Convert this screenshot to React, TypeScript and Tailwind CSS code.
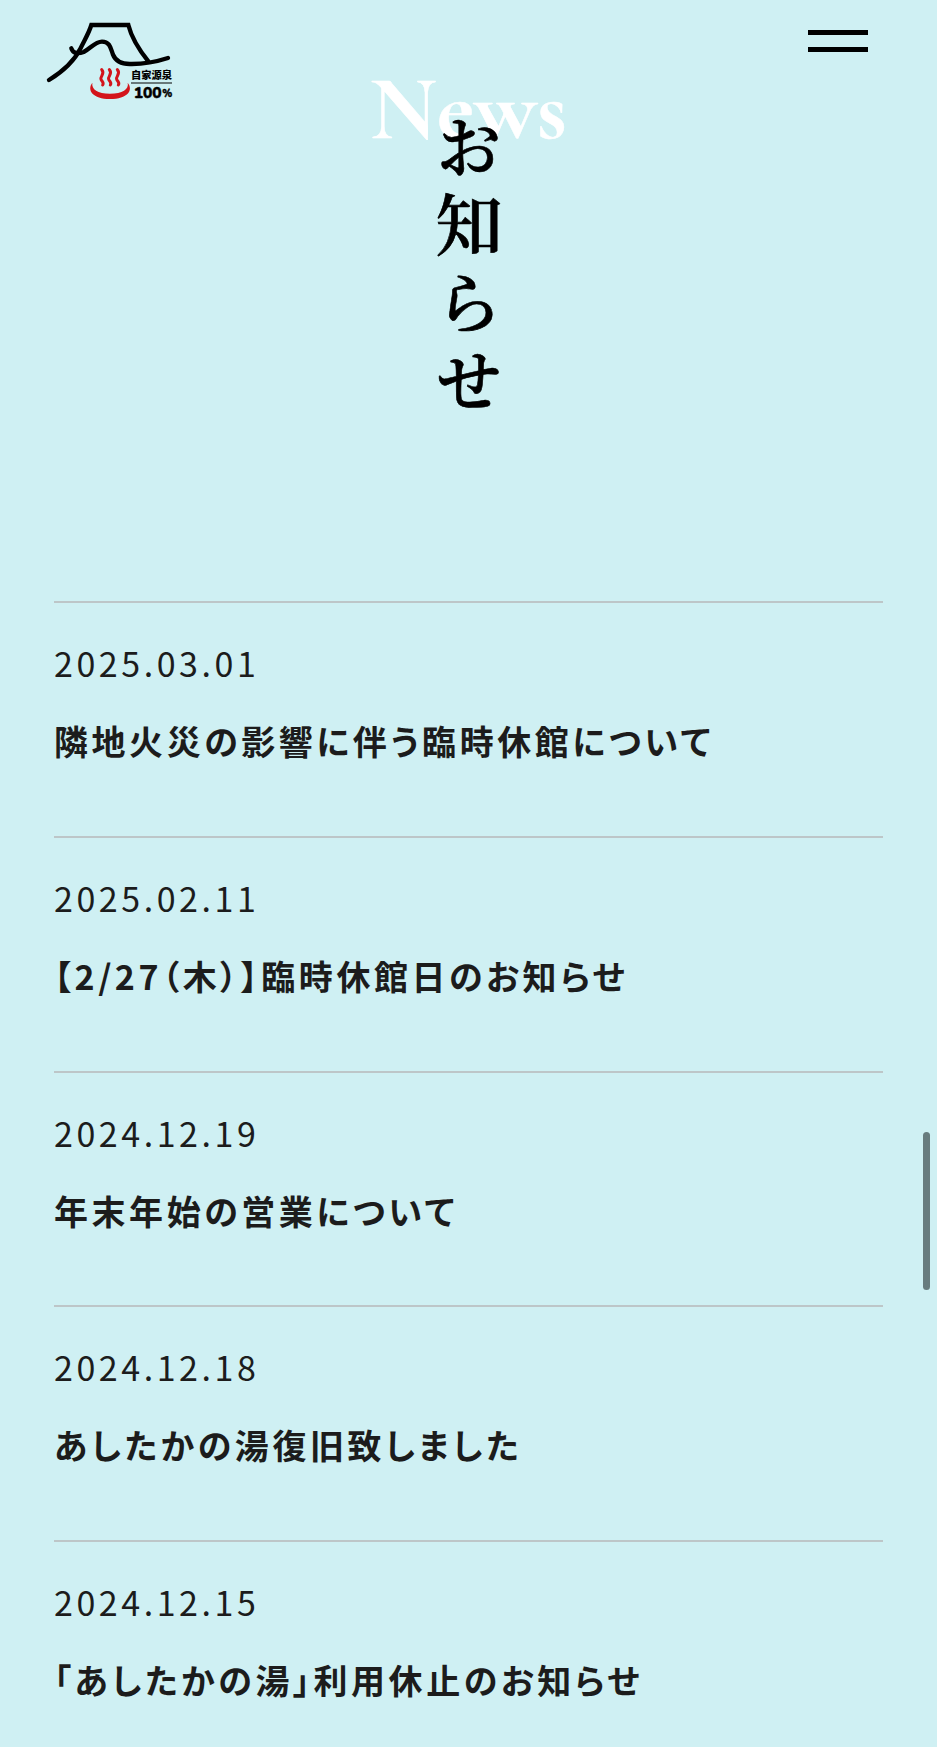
const news = [
  { date: '2025.03.01', title: '隣地火災の影響に伴う臨時休館について' },
  { date: '2025.02.11', title: '【2/27（木）】臨時休館日のお知らせ' },
  { date: '2024.12.19', title: '年末年始の営業について' },
  { date: '2024.12.18', title: 'あしたかの湯復旧致しました' },
  { date: '2024.12.15', title: '「あしたかの湯」利用休止のお知らせ' },
];

function Logo() {
  return (
    <svg width="160" height="100" viewBox="0 0 480 300" role="img" aria-label="自家源泉100%">
      <g fill="none" stroke="#000" strokeWidth="13" strokeLinecap="round" strokeLinejoin="miter">
        <path d="M57 210 C92 188 132 154 151 116 C168 82 177 68 184 45 H295 C306 89 330 123 355 154" />
        <path d="M124 115 C129 130 143 133 161 126 C181 116 195 95 216 95 C240 95 242 115 249 134 C257 154 275 162 299 162 C345 163 386 153 414 144" />
      </g>
      <g fill="none" stroke="#d3141b" strokeWidth="9" strokeLinecap="round">
        <path d="M215 179 c12 12 -6 20 -2 29 c3 7 10 9 5 17" />
        <path d="M238 179 c12 12 -6 20 -2 29 c3 7 10 9 5 17" />
        <path d="M262 179 c12 12 -6 20 -2 29 c3 7 10 9 5 17" />
      </g>
      <path d="M187 218 C170 240 188 267 240 267 C293 267 311 240 293 218 C298 237 277 251 240 251 C203 251 184 238 187 218Z" fill="#d3141b" />
      <text x="303" y="206" fontSize="30" fontWeight="900" textLength="123" lengthAdjust="spacingAndGlyphs" className="font-['Noto_Sans_CJK_JP',sans-serif]">自家源泉</text>
      <path d="M303 219 H426" stroke="#000" strokeWidth="3" />
      <text x="311" y="264" fontSize="50" fontWeight="800" textLength="84" lengthAdjust="spacingAndGlyphs" stroke="#000" strokeWidth="1.5" className="font-[Nunito,Lato,sans-serif]">100</text>
      <text x="397" y="260" fontSize="33" fontWeight="800" textLength="30" lengthAdjust="spacingAndGlyphs" stroke="#000" strokeWidth="1" className="font-[Nunito,Lato,sans-serif]">%</text>
    </svg>
  );
}

export default function App() {
  return (
    <div lang="ja" className="relative h-[1747px] overflow-hidden bg-[#cff0f3] font-['Noto_Sans_CJK_JP',sans-serif] text-[#1c1c1c]">
      <header className="flex h-[60px] items-start justify-between pt-[10px] pr-[69px] pl-[30px]">
        <Logo />
        <button aria-label="メニュー" className="mt-5 flex w-[60px] flex-col gap-3">
          <span className="h-[5px] bg-black" />
          <span className="h-[5px] bg-black" />
        </button>
      </header>
      <section className="flex h-[541px] flex-col items-center">
        <p className="mt-[7px] h-[46px] font-['Cormorant_Garamond','EB_Garamond','Liberation_Serif',serif] text-[90.5px] leading-[84px] font-bold text-white [-webkit-text-stroke:0.5px_white]">News</p>
        <h2 className="relative font-['Noto_Serif_CJK_JP','Noto_Serif_JP','Noto_Sans_CJK_JP',serif] text-[67px] leading-none font-semibold tracking-[11px] text-black [-webkit-text-stroke:0.6px_black] [writing-mode:vertical-rl]">お知らせ</h2>
      </section>
      <main className="mr-[54px] ml-[54px]">
        {news.map((item) => (
          <article key={item.date} className="h-[234.8px] border-t-2 border-[#bdc6c8] pt-[35px] text-[34px] tracking-[3.55px] whitespace-nowrap [font-feature-settings:'palt']">
            <time className="block leading-[50px]">{item.date}</time>
            <h3 className="mt-[28px] leading-[50px] font-bold">{item.title}</h3>
          </article>
        ))}
      </main>
      <div className="absolute top-[1132px] left-[923px] h-[158px] w-[7px] rounded-full bg-[#687c7e]" />
    </div>
  );
}
